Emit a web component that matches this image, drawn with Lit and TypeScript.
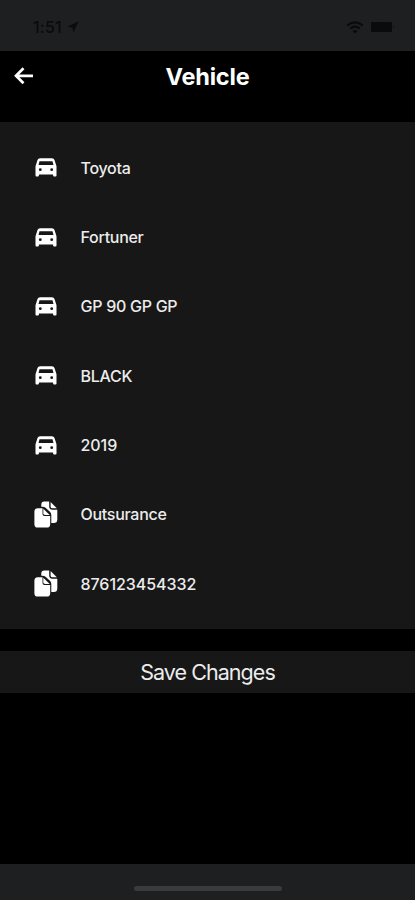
import { LitElement, html, css, svg } from "lit";
import { customElement } from "lit/decorators.js";
import { classMap } from "lit/directives/class-map.js";

const carIcon = svg`<svg class="car" width="22" height="19" viewBox="0 0 22 19">
  <path fill-rule="evenodd" d="M5.2 .3H16.8Q19 .3 19.5 2L21.5 8.3V17.6Q21.5 18.6 20.5 18.6H19.1Q18.1 18.6 18.1 17.6V16.4H3.9V17.6Q3.9 18.6 2.9 18.6H1.5Q.5 18.6 .5 17.6V8.3L2.5 2Q3 .3 5.2 .3ZM4.5 3.2L3.5 7H18.5L17.5 3.2ZM5.3 10.2A1.45 1.45 0 1 0 5.3 13.1A1.45 1.45 0 1 0 5.3 10.2ZM16.7 10.2A1.45 1.45 0 1 0 16.7 13.1A1.45 1.45 0 1 0 16.7 10.2Z"/>
</svg>`;

const docsIcon = svg`<svg class="docs" width="24" height="27" viewBox="0 0 24 27">
  <path d="M10.3 .5H15.2V5.6Q15.2 8.7 18.3 8.7H23.3V18.4Q23.3 21.9 19.8 21.9H17.3V14.2Q17.3 12.2 15.9 10.8L11.8 7.1Q10.3 5.8 8.4 5.8H7.3V3.5Q7.3 .5 10.3 .5Z"/>
  <path d="M16.6 1.1L22.8 7.3H18.6Q16.6 7.3 16.6 5.4Z"/>
  <path d="M3.6 7.2H8.5V12.4Q8.5 15.1 11.2 15.1H16.2V23.2Q16.2 26.6 12.8 26.6H3.7Q.4 26.6 .4 23.2V10.7Q.4 7.2 3.6 7.2Z"/>
  <path d="M9.3 7.8L15.7 14.1H11.2Q9.3 14.1 9.3 12.3Z"/>
</svg>`;

const rows = [
  { icon: carIcon, text: "Toyota" },
  { icon: carIcon, text: "Fortuner" },
  { icon: carIcon, text: "GP 90 GP GP" },
  { icon: carIcon, text: "BLACK" },
  { icon: carIcon, text: "2019" },
  { icon: docsIcon, text: "Outsurance" },
  { icon: docsIcon, text: "876123454332" },
];

@customElement("app-root")
export class AppRoot extends LitElement {
  static styles = css`
    :host { display: flex; flex-direction: column; height: 900px; background: #000; color: #ececec;
      font-family: Inter, "Liberation Sans", sans-serif; overflow: hidden; }
    * { box-sizing: border-box; }
    svg { display: block; fill: currentColor; }
    .status { height: 51px; flex: none; background: #1d1f20; color: #0a0b0b; display: flex; align-items: center;
      padding: 3px 19px 0 33px; font-size: 16px; font-weight: 500; }
    .time { letter-spacing: 0.2px; }
    .loc { margin-left: 5px; }
    .wifi { margin-left: auto; }
    .battery { margin-left: 6px; }
    .header { height: 71px; flex: none; display: grid; grid-template-columns: 48px 1fr 48px; align-items: start; color: #fff; }
    .back { padding: 0; border: 0; background: none; color: inherit; margin: 16px 0 0 14px; width: 20px; }
    h1 { margin: 11px 0 0; font-size: 23.5px; line-height: 30px; font-weight: 700; text-align: center; letter-spacing: -0.2px; }
    .list { height: 507px; flex: none; background: #171717; padding: 11px 0 0; margin: 0; list-style: none; }
    .row { height: 69.35px; display: flex; align-items: center; font-size: 16px; font-weight: 550; letter-spacing: -0.28px; }
    .numeric { letter-spacing: -0.05px; }
    .icon { width: 24px; margin: 0 22.5px 0 34px; display: flex; justify-content: center; color: #fff; }
    .save { margin: 22px 0 0; height: 42px; flex: none; border: 0; padding: 0; background: #171717; color: #ececec;
      font: 400 21.5px/42px Inter, "Liberation Sans", sans-serif; text-align: center; letter-spacing: -0.95px; }
    .home { margin-top: auto; height: 36.5px; flex: none; background: #1d1f20; display: flex; justify-content: center; padding-top: 22.5px; }
    .bar { width: 148px; height: 5px; border-radius: 2.5px; background: #3a3c3b; }
  `;

  render() {
    return html`
      <div class="status">
        <span class="time">1:51</span>
        <svg class="loc" width="12" height="12" viewBox="0 0 12 12"><path d="M11.6 .3L.3 5.7L5.5 6.5L6.4 11.6Z"/></svg>
        <svg class="wifi" width="18" height="13" viewBox="0 0 18 13">
          <path d="M1.2 4.5Q9 -1.8 16.8 4.5M4.1 7.5Q9 3.8 13.9 7.5" fill="none" stroke="currentColor" stroke-width="2"/>
          <path d="M6.3 9.9Q9 8 11.7 9.9L9 12.6Z"/>
        </svg>
        <svg class="battery" width="26" height="12" viewBox="0 0 26 12">
          <rect x="1" y="1" width="21" height="10" rx="1"/><path d="M23 4Q24.5 6 23 8Z"/>
        </svg>
      </div>
      <div class="header">
        <button class="back" aria-label="Back">
          <svg width="20" height="18" viewBox="0 0 20 18"><path d="M9.5 1.3L2 8.8L9.5 16.3M2 8.8H19" fill="none" stroke="currentColor" stroke-width="2.7"/></svg>
        </button>
        <h1>Vehicle</h1>
      </div>
      <ul class="list">
        ${rows.map((r) => html`<li class="row"><span class="icon">${r.icon}</span>
          <span class=${classMap({ numeric: /^\d+$/.test(r.text) })}>${r.text}</span></li>`)}
      </ul>
      <button class="save">Save Changes</button>
      <div class="home"><div class="bar"></div></div>
    `;
  }
}
